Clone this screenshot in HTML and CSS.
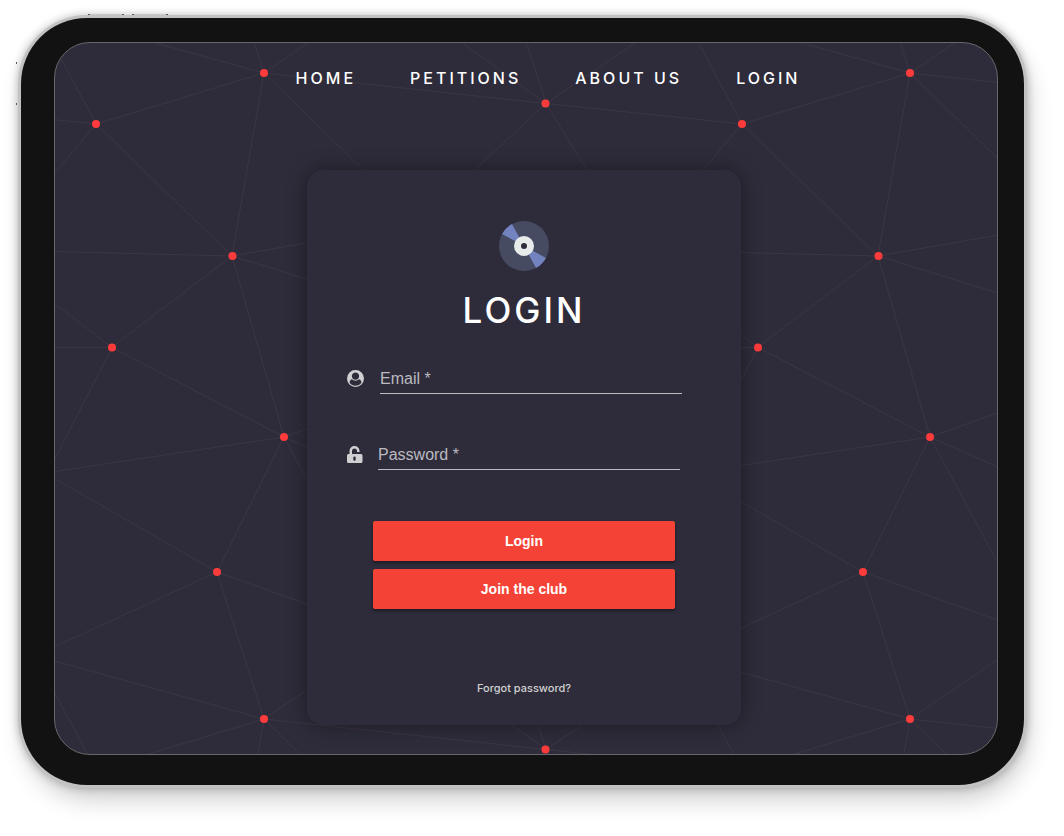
FILE: index.html
```html
<!DOCTYPE html>
<html lang="en">
<head>
<meta charset="utf-8">
<meta name="viewport" content="width=device-width, initial-scale=1">
<title>Login</title>
<link rel="stylesheet" href="styles.css">
</head>
<body>
<div class="device">
  <span class="key key-one"></span>
  <span class="key key-two"></span>
  <span class="key key-side"></span>
  <div class="screen">
    <svg class="network" aria-hidden="true">
      <defs>
        <path id="edges" class="edge" d="M96 124L264 73M96 124L232 256M96 124L-100 103.500M96 124l-60 71M96 124l-60 -112
          M264 73L232 256M264 73L546 103.500M264 73l120 117M264 73l100 -68M264 73L217 -74M264 73l-260 -72
          M232 256l-200 -5M232 256l120 -21M232 256l120 37M232 256L112 347M232 256L284 437
          M112 347.500l-60 -46M112 347.500h-60M112 347.500l-60 117M112 347.500L284 437
          M284 437l-232 35M284 437L217 572M284 437l70 -25M284 437l70 31M284 437l70 130
          M217 572l-165 -95M217 572l-165 76M217 572l137 49
          M546 103.500l-83 -60M546 103.500l-19 -60M546 103.500l88 -60M546 103.500l-72 67M546 103.500l41 67"/>
        <g id="nodes" class="node">
          <circle cx="96" cy="124" r="4"/><circle cx="264" cy="73" r="4"/>
          <circle cx="232.500" cy="256" r="4"/><circle cx="112" cy="347.500" r="4"/>
          <circle cx="284" cy="437" r="4"/><circle cx="217" cy="572" r="4"/>
          <circle cx="545.500" cy="103.500" r="4"/>
        </g>
      </defs>
      <g transform="translate(-55 -43)">
        <use href="#edges"/>
        <use href="#edges" x="646"/>
        <use href="#edges" y="646"/>
        <use href="#edges" x="646" y="646"/>
        <use href="#nodes"/>
        <use href="#nodes" x="646"/>
        <use href="#nodes" y="646"/>
        <use href="#nodes" x="646" y="646"/>
      </g>
    </svg>
    <nav class="nav">
      <a href="#home">HOME</a>
      <a href="#petitions">PETITIONS</a>
      <a href="#about">ABOUT US</a>
      <a href="#login">LOGIN</a>
    </nav>
    <main class="card">
      <svg class="disc" viewBox="0 0 50 50" aria-hidden="true">
        <circle cx="25" cy="25" r="25" fill="#464b62"/>
        <path d="M25 25L3 13Q7 6 13 3ZM25 25L47 37Q43 44 37 47Z" fill="#7383bf"/>
        <circle cx="25" cy="25" r="10" fill="#e7eceb"/>
        <circle cx="25" cy="25" r="3" fill="#2e2c3a"/>
      </svg>
      <h1 class="title">LOGIN</h1>
      <form class="form">
        <div class="field">
          <label for="email" aria-label="Email">
            <svg class="icon" viewBox="0 0 1792 1792"><path fill-rule="evenodd" d="M896 0a896 896 0 1 1 0 1792a896 896 0 1 1 0-1792zM1523 1339q-22-155-87.500-257.500t-184.500-118.500q-67 74-159.500 115.500t-195.500 41.500-195.500-41.500-159.500-115.500q-119 16-184.500 118.500t-87.500 257.500q106 150 271 237.500t356 87.500 356-87.500 271-237.500zM1280 640q0-159-112.500-271.500t-271.500-112.500-271.500 112.500-112.500 271.500 112.500 271.500 271.500 112.500 271.500-112.500 112.500-271.500z"/></svg>
          </label>
          <input id="email" type="email" placeholder="Email *">
        </div>
        <div class="field field-password">
          <label for="password" aria-label="Password">
            <svg class="icon" viewBox="0 0 17 17"><path fill-rule="evenodd" d="M2.500 8V5a5 5 0 0 1 10 0V6H10V5a2.500 2.500 0 0 0-5 0V8H14a1.500 1.500 0 0 1 1.500 1.500V15.500A1.500 1.500 0 0 1 14 17H1.500A1.500 1.500 0 0 1 0 15.500V9.500A1.500 1.500 0 0 1 1.500 8ZM7.500 10.500a1.200 1.200 0 0 0-1.200 1.200V13.500a1.200 1.200 0 0 0 2.400 0V11.700A1.200 1.200 0 0 0 7.500 10.500Z"/></svg>
          </label>
          <input id="password" type="password" placeholder="Password *">
        </div>
        <div class="actions">
          <button type="submit">Login</button>
          <button type="button">Join the club</button>
        </div>
      </form>
      <a class="forgot" href="#forgot">Forgot password?</a>
    </main>
  </div>
</div>
</body>
</html>
```
FILE: styles.css
```css
* { box-sizing: border-box; }

body {
  margin: 0;
  padding: 18px 40px 51px 21px;
  background: #fff;
  font-family: "Liberation Sans", Arial, sans-serif;
}

.device {
  position: relative;
  padding: 24px 26px 30px 33px;
  background: #121212;
  border-radius: 66px;
  box-shadow: 0 0 0 3px #c2c2c2, 0 0 8px 3px rgba(0, 0, 0, .25), 4px 14px 24px rgba(0, 0, 0, .2);
}

.key {
  position: absolute;
  top: -4px;
  width: 36px;
  height: 1px;
  background: #c8c8c8;
  border: solid #555;
  border-width: 0 2px;
}
.key-one { left: 67px; }
.key-two { left: 111px; }
.key-side {
  top: 44px;
  left: -5px;
  width: 1px;
  height: 43px;
  background: none;
  border-width: 2px 0;
}

.screen {
  position: relative;
  display: flex;
  flex-direction: column;
  align-items: center;
  padding: 23px 4px 29px 0;
  background: #2e2c3a;
  border: 1px solid #68686c;
  border-radius: 36px;
  overflow: hidden;
}

.network {
  position: absolute;
  inset: 0;
  width: 100%;
  height: 100%;
}
.edge { fill: none; stroke: #3d3642; stroke-width: 1; }
.node { fill: #ff3b3b; }

.nav {
  position: relative;
  display: flex;
  gap: 54px;
  padding-left: 48px;
  font: 500 16px/24px Inter, sans-serif;
  letter-spacing: 3px;
}
.nav a { color: #fff; text-decoration: none; }

.card {
  position: relative;
  display: flex;
  flex-direction: column;
  align-items: center;
  width: 100%;
  max-width: 434px;
  margin-top: 80px;
  padding: 51px 40px 29px;
  background: #2e2c3a;
  border-radius: 16px;
  box-shadow: 0 0 20px rgba(0, 0, 0, .4);
}

.disc { width: 50px; height: 50px; }

.title {
  margin: 18px 0 0;
  color: #fff;
  font: 500 35px/42px Inter, sans-serif;
  letter-spacing: 3px;
}

.form { width: 100%; margin-top: 32px; }

.field { display: flex; align-items: center; gap: 16px; padding-right: 19px; }
.field-password { gap: 14px; margin-top: 45px; padding-right: 21px; }
.field label { display: flex; }
.icon { width: 17px; height: 17px; fill: #d0d0d2; }
.field input {
  flex: 1;
  min-width: 0;
  height: 31px;
  padding: 2px 0 0;
  color: #fff;
  font: 16px/20px "Liberation Sans", Arial, sans-serif;
  background: none;
  border: 0;
  border-bottom: 1px solid #bbbac0;
  border-radius: 0;
}
.field input::placeholder { color: #bbbac0; opacity: 1; }

.actions { display: grid; gap: 8px; margin-top: 51px; padding: 0 26px; }
.actions button {
  height: 40px;
  color: #fff;
  font: bold 14px/20px "Liberation Sans", Arial, sans-serif;
  background: #f44336;
  border: 0;
  border-radius: 2px;
  box-shadow: 0 2px 3px rgba(0, 0, 0, .4);
}

.forgot {
  margin-top: 71px;
  color: #d0d0d2;
  font: 500 11px/16px Inter, sans-serif;
  text-decoration: none;
}
```
